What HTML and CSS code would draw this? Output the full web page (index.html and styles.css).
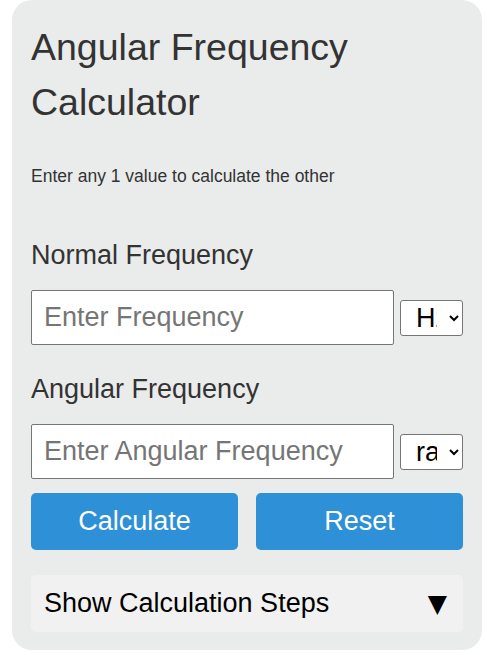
FILE: index.html
```html
<!DOCTYPE html>
<html>
<head>
<meta charset="utf-8">
<link rel="stylesheet" href="styles.css">
</head>
<body>
<div class="card">
  <h1 class="title">Angular Frequency Calculator</h1>
  <p class="subtitle">Enter any 1 value to calculate the other</p>
  <label class="label label-first">Normal Frequency</label>
  <div class="row">
    <input class="field" type="text" placeholder="Enter Frequency">
    <select class="unit"><option>Hz</option><option>kHz</option></select>
  </div>
  <label class="label label-second">Angular Frequency</label>
  <div class="row">
    <input class="field" type="text" placeholder="Enter Angular Frequency">
    <select class="unit"><option>rad/s</option><option>deg/s</option></select>
  </div>
  <div class="buttons">
    <button class="btn">Calculate</button>
    <button class="btn">Reset</button>
  </div>
  <div class="steps">
    <span class="steps-text">Show Calculation Steps</span>
    <span class="steps-arrow">▼</span>
  </div>
</div>
</body>
</html>
```
FILE: styles.css
```css
html, body {
  margin: 0;
  padding: 0;
  background: #ffffff;
}
body {
  font-family: "Liberation Sans", Arial, sans-serif;
}
.card {
  margin: 0 12px;
  width: 470px;
  height: 650px;
  box-sizing: border-box;
  background: #eaeceb;
  border-radius: 20px;
  padding: 20px 19px 18px 19px;
  display: flex;
  flex-direction: column;
}
.title {
  margin: 0;
  font-size: 37.5px;
  line-height: 55px;
  font-weight: normal;
  color: #333333;
}
.subtitle {
  margin: 36px 0 0 0;
  font-size: 17.5px;
  line-height: 20px;
  color: #333333;
}
.label {
  display: block;
  font-size: 27px;
  line-height: 31px;
  color: #333333;
}
.label-first {
  margin-top: 54px;
}
.label-second {
  margin-top: 29px;
}
.row {
  margin-top: 19px;
  display: flex;
  align-items: center;
  gap: 6px;
}
.field {
  width: 363px;
  height: 55px;
  box-sizing: border-box;
  border: 1px solid #767676;
  border-radius: 2px;
  padding: 0 12px;
  font-family: "Liberation Sans", Arial, sans-serif;
  font-size: 27px;
  color: #000000;
  background: #ffffff;
  margin: 0;
}
.field::placeholder {
  color: #757575;
}
.unit {
  width: 63px;
  height: 36px;
  box-sizing: border-box;
  font-family: "Liberation Sans", Arial, sans-serif;
  font-size: 27px;
  border: 1px solid #767676;
  border-radius: 3px;
  background: #ffffff;
  color: #000000;
  padding: 0 9px 0 11px;
  margin: 0;
}
.buttons {
  margin-top: 14px;
  display: flex;
  gap: 18px;
}
.btn {
  flex: 1;
  height: 57px;
  border: none;
  border-radius: 5px;
  background: #2e90d7;
  color: #ffffff;
  font-family: "Liberation Sans", Arial, sans-serif;
  font-size: 27px;
  padding: 0;
  margin: 0;
}
.steps {
  margin-top: 25px;
  height: 57px;
  box-sizing: border-box;
  background: #f1f1f1;
  border-radius: 5px;
  display: flex;
  align-items: center;
  justify-content: space-between;
  padding: 0 16px 0 13px;
  color: #000000;
}
.steps-text {
  font-size: 27px;
}
.steps-arrow {
  font-family: "DejaVu Sans", sans-serif;
  font-size: 25px;
}
```
